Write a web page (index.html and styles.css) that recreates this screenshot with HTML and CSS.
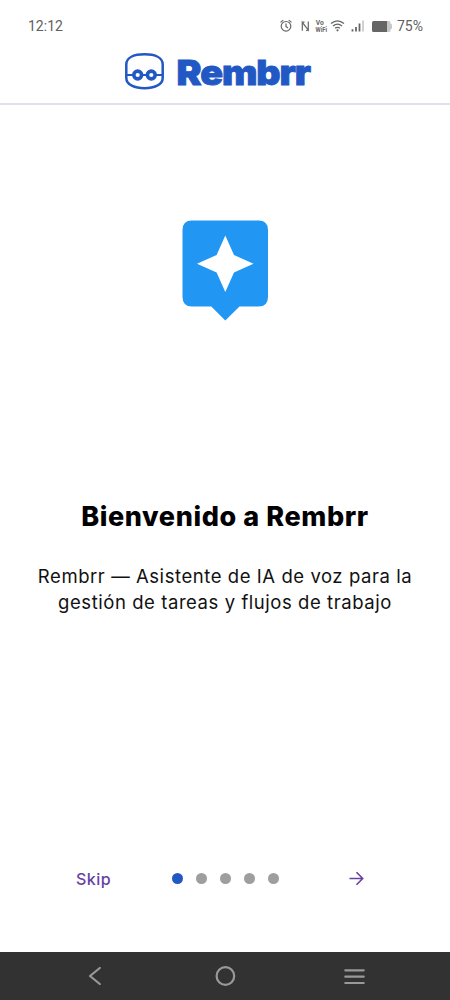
FILE: index.html
```html
<!DOCTYPE html>
<html lang="es">
<head>
<meta charset="utf-8">
<title>Rembrr</title>
<link rel="stylesheet" href="styles.css">
</head>
<body>
<div class="screen">
  <div class="status">
    <span class="clock">12:12</span>
    <svg class="status-icons" width="116" height="20" viewBox="278 16 116 20" fill="none" stroke="#666" stroke-width="1.2">
      <circle cx="286" cy="26.3" r="4.8"/>
      <path d="M286 23.500v3l2 1.500M280.500 22.400l2.800-2.300M291.500 22.400l-2.800-2.300"/>
      <path d="M302.300 30.800V22.300L308.300 30V21.500M302.300 22.300l2.200-.5M308.300 30l-2.200 .6"/>
      <text class="vo" x="315.800" y="25.300" textLength="8" lengthAdjust="spacingAndGlyphs">Vo</text>
      <text class="vo" x="315.500" y="31.700" textLength="11.500" lengthAdjust="spacingAndGlyphs">WiFi</text>
      <path d="M331 23.500q6.500-5.400 13 0M333 26q4.500-3.600 9 0M335 28.300q2.500-2 5 0" stroke-width="1.300"/>
      <circle cx="337.500" cy="30.300" r="1.100" fill="#666" stroke="none"/>
      <path d="M352.500 31.500v-2.300M356 31.500v-4.500M359.500 31.500v-8" stroke-width="1.800"/>
      <path d="M363 31.500v-11" stroke="#ccc" stroke-width="1.800"/>
      <path d="M386 21h3q1.500 0 1.500 1.500v1l1.500 1v4l-1.500 1v1q0 1.500-1.500 1.500h-3z" fill="#c8c8c8" stroke="none"/>
      <path d="M373.500 21H387v11h-13.500q-1.500 0-1.500-1.500v-8q0-1.500 1.500-1.500z" fill="#666" stroke="none"/>
    </svg>
    <span class="percent">75%</span>
  </div>
  <header class="brand">
    <svg width="190" height="44" viewBox="124 50 190 44">
      <g fill="none" stroke="#2158c4">
        <path stroke-width="2.500" d="M144.500 54.300C154 54.300 162.700 57 162.700 64.500V78C162.700 85 154 88.200 144.500 88.200S126.300 85 126.300 78V64.500C126.300 57 135 54.300 144.500 54.300z"/>
        <path stroke-width="2" d="M126 75h8M141 75h7M155 75h8"/>
        <circle cx="137.700" cy="75" r="3.900" stroke-width="3.600"/>
        <circle cx="151.300" cy="75" r="3.900" stroke-width="3.600"/>
      </g>
      <text class="wordmark" x="176.500" y="84.500" textLength="133.500" lengthAdjust="spacingAndGlyphs">Rembrr</text>
    </svg>
  </header>
  <main class="intro">
    <svg class="hero" width="86" height="101" viewBox="182 220 86 101">
      <path fill="#2196f3" d="M192 220.500h66.500q9.500 0 9.500 9.500v67q0 9.500-9.500 9.500H239.500L225.300 320.500 211.300 306.500H192q-9.500 0-9.500-9.500v-67q0-9.500 9.500-9.500z"/>
      <path fill="#fff" d="M225.300 235.500L234 255 253.500 263.700 234 272.500 225.300 292 216.600 272.500 197 263.700 216.600 255z"/>
    </svg>
    <h1 class="title">Bienvenido a Rembrr</h1>
    <p class="lead">Rembrr — Asistente de IA de voz para la<br>gestión de tareas y flujos de trabajo</p>
  </main>
  <div class="controls">
    <span class="skip">Skip</span>
    <div class="dots"><i class="dot active"></i><i class="dot"></i><i class="dot"></i><i class="dot"></i><i class="dot"></i></div>
    <svg class="next" width="16" height="16" viewBox="0 0 16 16" fill="none" stroke="#6542a5" stroke-width="1.600"><path d="M1.500 8.500h13M8.500 2.300L14.700 8.500 8.500 14.700"/></svg>
  </div>
  <nav class="navbar">
    <svg width="450" height="48" viewBox="0 952 450 48" fill="none" stroke="#999" stroke-width="2.200" stroke-linecap="round" stroke-linejoin="round">
      <path d="M99.800 968L90 976l9.800 8"/>
      <circle cx="225.400" cy="976" r="8.800"/>
      <path d="M345.300 970.300h18.400M345.300 976.700h18.400M345.300 983h18.400"/>
    </svg>
  </nav>
</div>
</body>
</html>
```
FILE: styles.css
```css
body { margin: 0; background: #fff; }
.screen { width: 450px; height: 1000px; display: flex; flex-direction: column; overflow: hidden; font-family: Inter, sans-serif; }
.status { height: 50px; box-sizing: border-box; padding: 16px 27px 0 28px; display: flex; align-items: flex-start; font-family: Roboto, sans-serif; font-size: 14px; line-height: 21px; color: #606060; }
.status-icons { margin-left: auto; margin-right: 3px; }
.vo { font: 700 6.5px Roboto, sans-serif; fill: #666; stroke: none; }
.brand { height: 53px; border-bottom: 2px solid #e1e1e8; padding-left: 124px; }
.brand svg { display: block; }
.wordmark { font: 900 34.5px Inter, sans-serif; letter-spacing: -1px; fill: #2158c4; stroke: #2158c4; stroke-width: 0.8px; }
.intro { flex: 1; display: flex; flex-direction: column; align-items: center; padding-top: 115px; }
.title { margin: 179px 0 0; font-size: 27px; line-height: 34px; font-weight: 800; letter-spacing: 0.6px; color: #000; white-space: nowrap; }
.lead { margin: 29px 0 0; font-size: 18.5px; line-height: 26px; letter-spacing: 0.56px; text-align: center; color: #111; white-space: nowrap; }
.controls { height: 20px; margin-bottom: 64px; padding: 0 86px 0 76px; display: flex; align-items: center; }
.skip { width: 95.5px; padding-top: 1px; font-size: 16px; line-height: 20px; font-weight: 500; letter-spacing: 0.5px; color: #6542a5; }
.dots { display: flex; gap: 13.1px; }
.dot { width: 11px; height: 11px; border-radius: 50%; background: #9e9e9e; }
.dot.active { background: #2158c4; }
.next { margin-left: auto; }
.navbar { height: 48px; background: #323232; }
.navbar svg { display: block; }
```
